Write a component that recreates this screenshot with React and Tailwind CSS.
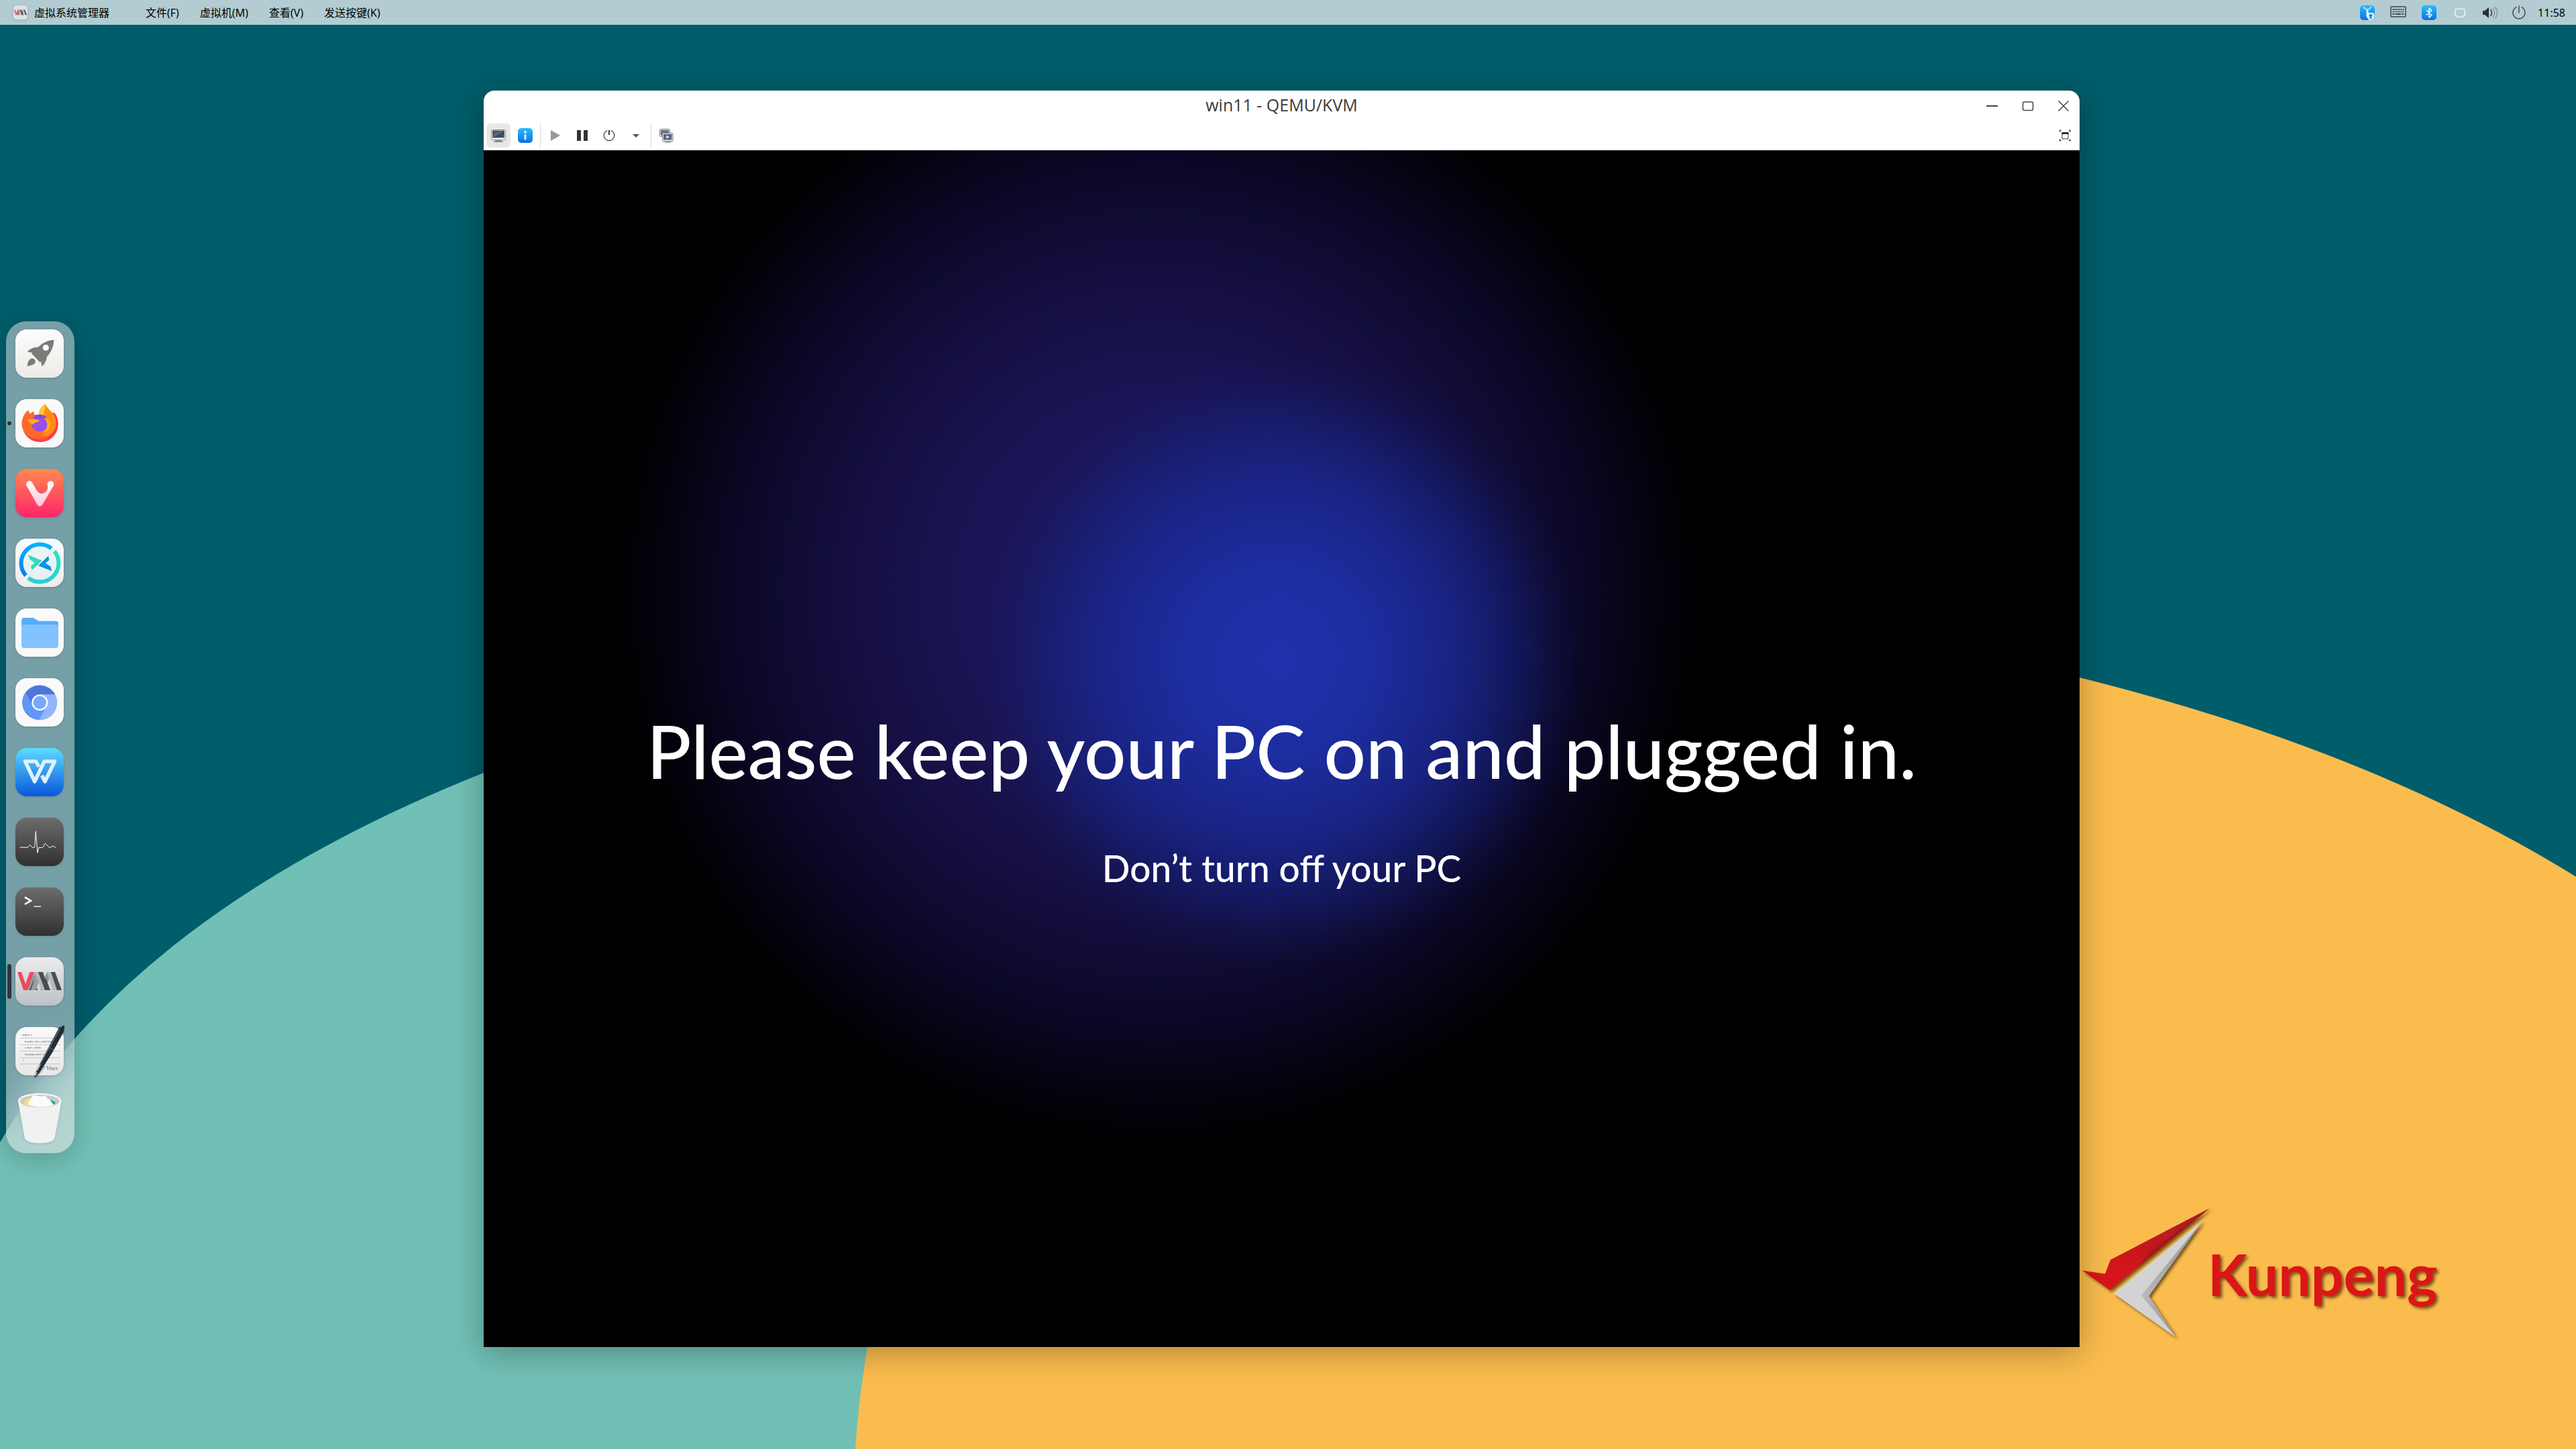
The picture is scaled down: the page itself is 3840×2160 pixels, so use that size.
import React from "react";

/* ---------- Desktop wallpaper ---------- */

function Wallpaper() {
  return (
    <svg
      className="absolute inset-0 h-full w-full"
      viewBox="0 0 3840 2160"
      preserveAspectRatio="xMidYMid slice"
      role="img"
      aria-label="Kunpeng"
    >
      <defs>
        <linearGradient id="wing-red" x1="0" y1="1" x2="1" y2="0">
          <stop offset="0" stopColor="#dc1618" />
          <stop offset="0.35" stopColor="#cf181b" />
          <stop offset="1" stopColor="#a31c26" />
        </linearGradient>
        <linearGradient id="wing-fold" x1="0" y1="0" x2="1" y2="0.4">
          <stop offset="0" stopColor="#c6c6c6" />
          <stop offset="1" stopColor="#8e8e8e" />
        </linearGradient>
        <filter id="logo-shadow" x="-10%" y="-10%" width="120%" height="130%">
          <feDropShadow dx="3" dy="3" stdDeviation="2" floodColor="#3a2400" floodOpacity="0.7" />
        </filter>
      </defs>
      <rect width="3840" height="2160" fill="#005d6a" />
      <path
        d="M0 1703 Q195 1362 721 1152 C1000 1040 1400 980 1800 1300 L1800 2160 H0 Z"
        fill="#71c0b6"
      />
      <path
        d="M1275 2160 Q1280 2085 1293 2009 C1400 1380 2100 760 3100 1010 Q3537 1119 3840 1307 V2160 Z"
        fill="#fbbc4e"
      />
      <g filter="url(#logo-shadow)">
        <path d="M3104 1894 L3138 1899 L3146 1878 L3294 1801 L3145 1923 Z" fill="url(#wing-red)" />
        <path d="M3294 1801 L3204 1866 L3188 1888 Z" fill="#8e151c" opacity="0.55" />
        <path d="M3151 1928 L3284 1819 L3203 1932 L3243 1993 Z" fill="#d3d3d3" />
        <path d="M3284 1819 L3192 1931 L3243 1993 L3203 1932 Z" fill="url(#wing-fold)" />
        <text
          x="3291"
          y="1932"
          fontSize="86"
          fontWeight="700"
          fill="#da1719"
          className="font-['Lato',sans-serif]"
        >
          Kunpeng
        </text>
      </g>
    </svg>
  );
}

/* ---------- Menu bar ---------- */

function VmMark() {
  return (
    <g>
      <path d="M29 22 h7 l-13 27 h-7z" fill="#8f9a9c" />
      <path d="M27 34 l6 15 h-12z" fill="#4a4c4e" />
      <path d="M32 22 h9 l-11 27 h-7z" fill="#95a0a1" />
      <path d="M47 22 h7 l-10 27 h-7z" fill="#8b9799" />
      <path d="M45 31 l7 18 h-11z" fill="#45474a" />
      <path d="M28 22 h7 l11 27 h-7z" fill="#b3b8bc" />
      <path d="M34 22 h7 l9 27 h-6z" fill="#4b4d4d" />
      <path d="M47 22 h7 l9 27 h-7z" fill="#b3b8bc" />
      <path d="M53 22 h6 l10 27 h-7z" fill="#4b4d4d" />
      <path d="M3 22 h6 l6 18 l6.5 -18 h6.5 l-10.500 27 h-5.500z" fill="#f0485a" />
    </g>
  );
}

function MenuBar() {
  const menus = ["文件(F)", "虚拟机(M)", "查看(V)", "发送按键(K)"];
  return (
    <header className="relative flex h-[37px] items-center bg-[#b2ccd1] pr-4 pl-5 text-base leading-6 text-black">
      <svg className="size-[21px] drop-shadow-sm" viewBox="0 0 72 72" aria-hidden="true">
        <rect width="72" height="72" rx="16" fill="#dfe1e3" />
        <VmMark />
      </svg>
      <button type="button" className="ml-[10px]">虚拟系统管理器</button>
      <nav className="ml-[54px] flex gap-[31px]">
        {menus.map((m) => (
          <button key={m} type="button">{m}</button>
        ))}
      </nav>
      <div className="ml-auto flex items-center gap-[22px]">
        <button type="button" aria-label="软件更新">
          <svg className="size-6" viewBox="0 0 24 24" fill="none">
            <defs>
              <linearGradient id="tray-blue" x1="0" y1="0" x2="0" y2="1">
                <stop offset="0" stopColor="#27bdfc" />
                <stop offset="1" stopColor="#0f6fe0" />
              </linearGradient>
            </defs>
            <rect x="1" y="1" width="22" height="22" rx="5" fill="url(#tray-blue)" />
            <path d="M7 3 a5 4 0 0 0 10 0" stroke="#d9f4ff" strokeWidth="1.600" />
            <path d="M10.500 9 a1.500 1.500 0 0 1 3 0 v3 h5 a4 4 0 0 1 4 4 v2 a5 5 0 0 1 -5 5 h-2 a4 4 0 0 1 -3 -2 l-2.500 -5 h.5z" fill="#eef0f3" />
            <path d="M17 13 l3.500 4 h-2 v4 h-3 v-4 h-2z" fill="#0d92f4" />
          </svg>
        </button>
        <button type="button" aria-label="键盘">
          <svg className="size-6" viewBox="0 0 24 24" fill="none" stroke="#3f4547">
            <rect x="1" y="3" width="22" height="15" rx="1" strokeWidth="1.500" />
            <path d="M3.500 7h17" strokeWidth="2" strokeDasharray="2 1" />
            <path d="M3.500 10.500h17" strokeWidth="2" strokeDasharray="1.500 1" />
            <path d="M3.500 14h3M8 14h8M17.500 14h3" strokeWidth="2" />
          </svg>
        </button>
        <button type="button" aria-label="蓝牙">
          <svg className="size-6" viewBox="0 0 24 24" fill="none">
            <rect x="1" y="1" width="22" height="22" rx="5" fill="url(#tray-blue)" />
            <path d="M8 8.500 L16 15.500 L12 19 V5 L16 8.500 L8 15.500" stroke="#fff" strokeWidth="1.500" strokeLinejoin="round" />
          </svg>
        </button>
        <button type="button" aria-label="显示器">
          <svg className="size-6" viewBox="0 0 24 24" fill="none" stroke="#fff" strokeWidth="1.200">
            <path d="M6 6.500 h12 q1 0 1 1 v8 q0 1 -1 1 h-1.500 v2 h-9 v-2 h-1.500 q-1 0 -1 -1 v-8 q0 -1 1 -1z" />
          </svg>
        </button>
        <button type="button" aria-label="音量">
          <svg className="size-6" viewBox="0 0 24 24" fill="none" strokeWidth="1.500">
            <path d="M0 9 h3 l6 -5 v16 l-6 -5 h-3z" fill="#2b2f31" />
            <path d="M11.500 7 q4 5 0 10" stroke="#3b4143" />
            <path d="M15 5 q5.500 7 0 14" stroke="#8b9b9f" />
            <path d="M18 3 q7.500 9 0 18" stroke="#8b9b9f" />
          </svg>
        </button>
      </div>
      <button type="button" aria-label="电源" className="ml-[18px]">
        <svg className="size-6" viewBox="0 0 24 24" fill="none" stroke="#33383a" strokeWidth="1.300">
          <path d="M8.500 3.500 a9 9 0 1 0 7 0" />
          <path d="M12 1.500 v11" />
        </svg>
      </button>
      <time className="ml-4 font-['Noto_Sans',sans-serif]">11:58</time>
    </header>
  );
}

/* ---------- Dock ---------- */

function Tile({ from, to, children }) {
  const id = React.useId();
  return (
    <svg className="block size-[72px] overflow-visible drop-shadow" viewBox="0 0 72 72" fill="none" aria-hidden="true">
      <defs>
        <linearGradient id={id} x1="0" y1="0" x2="0" y2="1">
          <stop offset="0" stopColor={from} />
          <stop offset="1" stopColor={to} />
        </linearGradient>
      </defs>
      <rect width="72" height="72" rx="17" fill={`url(#${id})`} />
      {children}
    </svg>
  );
}

const Launcher = () => (
  <Tile from="#fcfcfc" to="#ecebe8">
    <path d="M57.300 15.700 C51 15.500 41 19 34 26.500 C28 26 21 29 17.700 33.700 L25 34.500 L24 36 L36.500 49 L38 48 L39.700 55.300 C44 51 46.500 46 47 40.500 C54.500 33 57.500 23 57.300 15.700 Z" fill="#7b7b79" />
    <circle cx="45.300" cy="27.300" r="4.500" fill="#fff" />
    <path d="M17.700 55 C18 50 19.500 45 23.500 43.500 C28 42 31.500 47 29 50.500 C26.500 53.500 21 54 17.700 55 Z" fill="#7b7b79" />
  </Tile>
);

const Firefox = () => (
  <Tile from="#fafafa" to="#f8f8f8">
    <path d="M10 31 C8 50 20 64 37 64 C54 64 65 50 63.500 34 C63 28 61 23 57.500 20 Z" fill="#ff3b4b" />
    <path d="M19.300 16.300 C13 21 9.500 29 9.500 37 C10 50 21 59 35 59.500 C46 59.500 56 53 58.500 43 L47 24 L28 23.300 L27 18 L21.500 22 Z" fill="#ff6a2c" />
    <path d="M44.700 7.300 C38 11 35 17 35 23 C42 24 49 28 50 36 C50.500 45 46 50 39 54 C52 57 60.500 47 60.500 36 C60.500 25 56 22 53 18 C50 15 46.500 12 44.700 7.300 Z" fill="#ff8c17" />
    <path d="M44.700 7.300 C38 11 35 17 35 23 L42 24.500 C42 17 46 13 44.700 7.300 Z" fill="#ffc72f" />
    <circle cx="36.300" cy="36" r="12.500" fill="#9850ea" />
    <path d="M29 24.500 C36 21.500 44 23 47.500 28.500 C41 27 34 30 28.500 28.500 Z" fill="#8a45dd" />
    <path d="M42 28 C53 27 55.500 41 47 47.500 C45 49 42.500 50 40 50 C50 44 49 33 42 28 Z" fill="#ffa91c" />
    <path d="M17 31.700 C20 29 28 29.500 36 31.500 C35 35 29 34 26 38 C23 35 19 34.500 17 31.700 Z" fill="#ffab26" />
    <path d="M26 37 C22 41 25 47 31 50 C24 49 20 44 20.500 38 Z" fill="#ff6a2c" />
  </Tile>
);

const Vivaldi = () => {
  const id = React.useId();
  return (
    <Tile from="#ff8a4f" to="#ff246b">
      <defs>
        <linearGradient id={id} x1="0" y1="0" x2="0" y2="1">
          <stop offset="0" stopColor="#fff" />
          <stop offset="1" stopColor="#ffc4d6" />
        </linearGradient>
      </defs>
      <path d="M16.300 24.500 A4.900 4.900 0 0 1 24.500 19.500 L30.500 30 C33 35 36 37 40 36.700 C45 36 49 32 48 25 A4.900 4.900 0 1 1 57 24.500 L40.500 53 Q36.300 59 32.300 53 Z" fill={`url(#${id})`} />
    </Tile>
  );
};

const Remote = () => {
  const id = React.useId();
  return (
    <Tile from="#fbfbfb" to="#eeedeb">
      <defs>
        <linearGradient id={`${id}a`} x1="0" y1="0" x2="0" y2="1">
          <stop offset="0" stopColor="#02b2fd" />
          <stop offset="1" stopColor="#0580ee" />
        </linearGradient>
        <linearGradient id={`${id}b`} x1="0" y1="0" x2="0" y2="1">
          <stop offset="0" stopColor="#27e7b9" />
          <stop offset="1" stopColor="#27cfd6" />
        </linearGradient>
      </defs>
      <circle cx="36" cy="36" r="26" fill="#dfeff3" opacity="0.5" />
      <path d="M15.500 55 A28 28 0 0 1 53.700 14.400" stroke={`url(#${id}a)`} strokeWidth="6" />
      <path d="M58.100 18.700 A28 28 0 0 1 19.100 58.400" stroke={`url(#${id}b)`} strokeWidth="6" />
      <path d="M19 24.300 L39.500 32.700 L24.700 47 L23 41 L28.700 36 L21.700 31 Z" fill="#2bdcc0" />
      <path d="M54.300 48.300 L34 40.300 L49 25.700 L50.300 31.700 L44.700 36.700 L52.300 41.300 Z" fill="#0b8ff1" />
    </Tile>
  );
};

const Files = () => (
  <Tile from="#fbfbfb" to="#f9f9f9">
    <path d="M9 18 q0 -4 4 -4 h13 q2 0 4 2 l3 2 q1 .7 3 .7 h24 q4 0 4 4 v8 h-55z" fill="#56adfe" />
    <rect x="9" y="24" width="55" height="35" rx="4" fill="#83c2ff" />
  </Tile>
);

const Chromium = () => (
  <Tile from="#fafafa" to="#f9f9f9">
    <circle cx="36" cy="36.300" r="26" fill="#5e97f5" />
    <path d="M36 24 H59 A26 26 0 0 1 35.300 62.300 L47 41 Z" fill="#92b6f9" />
    <path d="M15.300 22 A26 26 0 0 1 59 24 H36 L24.300 38 Z" fill="#4c77d8" />
    <circle cx="36.300" cy="36.300" r="12" fill="#fff" />
    <circle cx="36.300" cy="36.300" r="9.700" fill="#76a8ff" />
  </Tile>
);

const Writer = () => (
  <Tile from="#5ddcff" to="#0a56dc">
    <path d="M35 28 L30.500 20 H14.500 L28.700 50 L43 20 H58.500 L44 50 L39.500 41" stroke="#dff0ff" strokeWidth="5.500" strokeLinejoin="round" />
  </Tile>
);

const Monitor = () => (
  <Tile from="#6c6c6c" to="#303030">
    <path d="M6.700 44 L18.300 44.300 L21.700 40.300 L25.700 44.700 L28.700 44 L30.300 20.300 L33 52.300 L34.700 44.300 L40.300 44.700 L44.300 38.300 L51 44.700 L55.700 42 L60.300 44.700" stroke="#fff" strokeWidth="1" strokeLinejoin="round" />
  </Tile>
);

const Terminal = () => (
  <Tile from="#6c6c6c" to="#303030">
    <path d="M14 14.500 L23 19.700 L14 25" stroke="#fff" strokeWidth="2.600" />
    <path d="M27.300 28.300 H38" stroke="#fff" strokeWidth="1.300" />
  </Tile>
);

const VirtManager = () => (
  <Tile from="#ececed" to="#bcc1c6">
    <VmMark />
  </Tile>
);

const Editor = () => (
  <Tile from="#fafafa" to="#e9e7e8">
    <path d="M6.700 16.300h60M6.700 26.300h60M6.700 36h60M6.700 45.700h60M6.700 55h60" stroke="#b9b9b9" strokeWidth="0.800" />
    <g fontSize="5" fontStyle="italic" fill="#555" className="font-['Liberation_Serif',serif]">
      <text x="10" y="13">editor {"{"}</text>
      <text x="14" y="23">border 2px solid black</text>
      <text x="14" y="32">color: white</text>
      <text x="14" y="42">background: transp</text>
      <text x="10" y="51">{"}"}</text>
      <text x="46" y="64" fontSize="8">Vince</text>
    </g>
    <path d="M29 75 L40 56 L46 59 L31 76 Z" fill="#00000030" />
    <path d="M27.700 76 L31.500 64 L49 31 L65 1 Q67 -1 69 0 L70 -2 Q72 -3 73.500 -1 L72.500 2 Q73.500 4 72 7 L55 38 L36 68 Z" fill="#242e36" />
    <path d="M36 57 L66 3" stroke="#60717e" strokeWidth="1.300" />
    <path d="M32 65 L37 56 M29.500 72 L32 67" stroke="#e7edf0" strokeWidth="1.300" />
    <path d="M50 30 L57 34" stroke="#7e8c96" strokeWidth="0.800" />
  </Tile>
);

const Trash = () => (
  <svg className="block size-[72px] overflow-visible drop-shadow" viewBox="0 0 72 72" fill="none" aria-hidden="true">
    <path d="M4 7 L13.700 61 C15 72 57 72 58.700 61 L68.600 7 Z" fill="#f1f1f1" />
    <ellipse cx="36.300" cy="6" rx="32.500" ry="11.500" fill="#f4f4f4" />
    <ellipse cx="36.300" cy="6.500" rx="29.500" ry="9.500" fill="#c9c9c9" />
    <path d="M12 10 C13 6 17 2 23 1 L27 13 C20 14 15 12.500 12 10 Z" fill="#fbdf72" />
    <path d="M49 5 C53 4.500 57 6 60 9 C57 12 53 13 50 13 Z" fill="#21a597" />
    <path d="M18 11 C21 6 23 2 27 -2.500 L38 -0.500 L45 -1.500 L47 2 C51 4 54 8 57 12 C49 16 27 17 18 11 Z" fill="#fbfbfb" />
  </svg>
);

const DOCK = [
  ["启动器", Launcher],
  ["Firefox", Firefox, "dot"],
  ["Vivaldi", Vivaldi],
  ["远程桌面", Remote],
  ["文件管理器", Files],
  ["Chromium", Chromium],
  ["WPS 文字", Writer],
  ["系统监视器", Monitor],
  ["终端", Terminal],
  ["虚拟系统管理器", VirtManager, "bar"],
  ["文本编辑器", Editor],
  ["回收站", Trash],
];

function Dock() {
  return (
    <nav
      aria-label="Dock"
      className="ml-[9px] flex w-[102px] shrink-0 flex-col items-start gap-8 rounded-[30px] bg-[#faebee]/47 py-3 pl-[14px] shadow-[0_8px_40px_rgba(0,0,0,0.2)] backdrop-blur-[30px]"
    >
      {DOCK.map(([label, Icon, mark]) => (
        <button key={label} type="button" aria-label={label} className="relative">
          {mark === "dot" && <span className="absolute top-[33px] -left-3 size-[6px] rounded-full bg-[#33333d]" />}
          {mark === "bar" && <span className="absolute top-[10px] -left-3 h-[52px] w-[6px] rounded-full bg-[#33333d]" />}
          <Icon />
        </button>
      ))}
    </nav>
  );
}

/* ---------- Virtual machine window ---------- */

function ToolButton({ label, active, children }) {
  return (
    <button
      type="button"
      aria-label={label}
      className={`grid size-9 place-items-center rounded-md ${active ? "bg-[#e8e8e8]" : ""}`}
    >
      <svg className="size-6" viewBox="0 0 24 24" fill="none" aria-hidden="true">{children}</svg>
    </button>
  );
}

function Separator() {
  return <span className="h-9 w-px bg-[#d8d8d8]" />;
}

function TitleBar() {
  return (
    <div className="grid h-[49px] grid-cols-[1fr_auto_1fr] items-center pb-1">
      <h1 className="col-start-2 pb-1 text-[25px] leading-[30px] text-[#3a3a3a]">win11 - QEMU/KVM</h1>
      <div className="flex justify-end gap-[5px] text-[#444]">
        <button type="button" aria-label="最小化" className="grid h-9 w-12 place-items-center">
          <svg className="size-6" viewBox="0 0 24 24" stroke="currentColor" strokeWidth="2"><path d="M3 12h17" /></svg>
        </button>
        <button type="button" aria-label="最大化" className="grid h-9 w-12 place-items-center">
          <svg className="size-6" viewBox="0 0 24 24" fill="none" stroke="currentColor" strokeWidth="1.500"><rect x="4.500" y="6" width="15" height="12.500" rx="2" /></svg>
        </button>
        <button type="button" aria-label="关闭" className="grid h-9 w-12 place-items-center">
          <svg className="size-6" viewBox="0 0 24 24" stroke="currentColor" strokeWidth="1.500"><path d="M4.500 4.500l15 15M19.500 4.500l-15 15" /></svg>
        </button>
      </div>
    </div>
  );
}

function Toolbar() {
  return (
    <div className="flex h-10 items-start gap-1 px-1">
      <ToolButton label="显示控制台" active>
        <defs>
          <linearGradient id="screen" x1="0" y1="0" x2="1" y2="1">
            <stop offset="0" stopColor="#36455a" />
            <stop offset="0.45" stopColor="#5e6b7d" />
            <stop offset="0.6" stopColor="#36455a" />
            <stop offset="1" stopColor="#526074" />
          </linearGradient>
        </defs>
        <rect x="1.500" y="3.500" width="21" height="15" rx="1" fill="#f7f7f7" stroke="#8a8a88" />
        <rect x="3.500" y="5" width="17" height="10" fill="url(#screen)" stroke="#2d3a4d" strokeWidth="0.700" />
        <path d="M8 19h8l1 1.500h2v1.500h-14v-1.500h2z" fill="#8a8a88" />
      </ToolButton>
      <ToolButton label="显示虚拟硬件详情">
        <rect x="1" y="1" width="22" height="22" rx="5" fill="url(#tray-blue)" />
        <circle cx="12" cy="7" r="1.800" fill="#fff" />
        <rect x="10.500" y="10" width="3" height="8.500" rx="1.500" fill="#d9f1ff" />
      </ToolButton>
      <Separator />
      <ToolButton label="运行">
        <path d="M5 4l14 8-14 8z" fill="#989898" />
      </ToolButton>
      <ToolButton label="暂停">
        <path d="M4 4h6v16H4zM14 4h6v16h-6z" fill="#333" />
      </ToolButton>
      <ToolButton label="关机">
        <path d="M9.500 4.500a7.800 7.800 0 1 0 5 0" stroke="#444" strokeWidth="1.200" />
        <path d="M12 4v7" stroke="#333" strokeWidth="2" />
      </ToolButton>
      <ToolButton label="关机选项">
        <path d="M7 10h10l-5 5z" fill="#555" />
      </ToolButton>
      <Separator />
      <ToolButton label="管理快照">
        <rect x="2.500" y="2.500" width="15" height="11" rx="1" fill="#f7f7f7" stroke="#77797a" />
        <rect x="4.500" y="4.500" width="11" height="7" fill="#68778a" stroke="#37475c" strokeWidth="0.800" />
        <rect x="6.500" y="8.500" width="15.500" height="12" rx="1" fill="#f7f7f7" stroke="#77797a" />
        <rect x="8.500" y="10.500" width="11.500" height="7.500" fill="#5d6c80" stroke="#37475c" strokeWidth="0.800" />
        <path d="M12.500 12l4 2.200-4 2.300z" fill="#fff" />
        <path d="M10 21.500h9v1.500h-9z" fill="#999" />
      </ToolButton>
      <div className="ml-auto">
        <ToolButton label="切换全屏视图">
          <path d="M8 8h9v9H8z" stroke="#2e2e2e" strokeWidth="1" />
          <path d="M7.500 7h10v3h-10z" fill="#2e2e2e" />
          <path d="M4.500 6.500v-2h2M18 4.500h2v2M20 17.500v2h-2M6.500 19.500h-2v-2" stroke="#2e2e2e" strokeWidth="1.300" />
        </ToolButton>
      </div>
    </div>
  );
}

function GuestScreen() {
  return (
    <section className="aspect-[4/3] w-full bg-black bg-[radial-gradient(ellipse_19%_25.5%_at_49.8%_42.7%,rgba(31,49,174,0.98)_0%,rgba(29,47,166,0.92)_30%,rgba(25,41,148,0.78)_58%,rgba(21,35,128,0.5)_78%,rgba(17,29,108,0.2)_91%,transparent_100%),radial-gradient(ellipse_34%_46%_at_42.3%_37%,#201861_0%,#1c1556_35%,#150f42_56%,#0b0827_78%,#04030f_91%,transparent_100%)] pt-[822px] text-center font-['Lato','Open_Sans',sans-serif] font-medium text-white">
      <p className="text-[110px] leading-[144px]">Please keep your PC on and plugged in.</p>
      <p className="mt-[68px] text-[55px] leading-[72px]">Don’t turn off your PC</p>
    </section>
  );
}

export default function App() {
  return (
    <div className="relative flex min-h-screen flex-col overflow-hidden bg-[#005d6a] font-['Noto_Sans','Noto_Sans_CJK_SC',sans-serif]">
      <Wallpaper />
      <MenuBar />
      <div className="relative flex flex-1 items-center">
        <Dock />
        <main className="mr-[740px] ml-[610px] flex-1 self-start pt-[98px]">
          <article className="overflow-hidden rounded-t-2xl bg-white font-['Open_Sans',sans-serif] shadow-[0_8px_50px_rgba(0,0,0,0.3)]">
            <TitleBar />
            <Toolbar />
            <GuestScreen />
          </article>
        </main>
      </div>
    </div>
  );
}
